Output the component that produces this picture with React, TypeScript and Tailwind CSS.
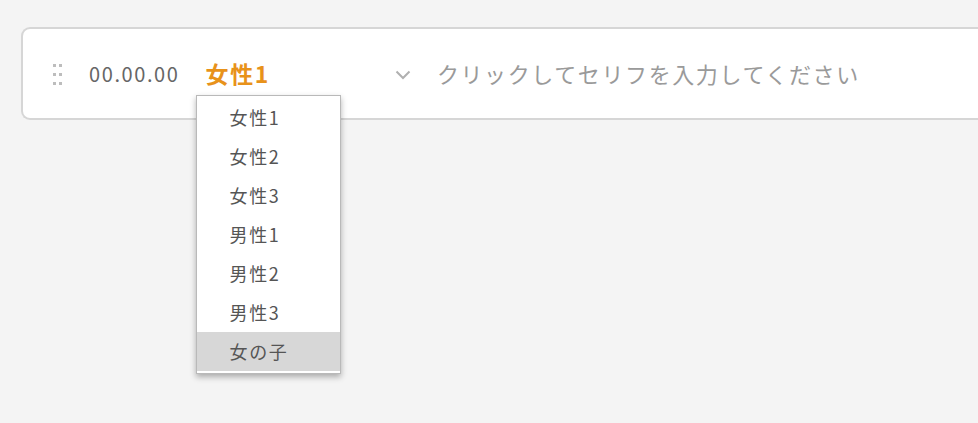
import React from 'react';

const speakers = ['女性1', '女性2', '女性3', '男性1', '男性2', '男性3', '女の子'];

const DragHandle = () => (
  <div className="grid grid-cols-2 gap-x-[3px] gap-y-[6px]">
    {Array.from({ length: 6 }).map((_, i) => (
      <span key={i} className="block w-[3px] h-[3px] bg-[#bdbdbd]" />
    ))}
  </div>
);

export default function App() {
  const selected = 6;
  return (
    <div
      className="min-h-[423px] w-full overflow-hidden bg-[#f4f4f4] pt-[27px] pl-[21px]"
      style={{ fontFamily: '"Noto Sans CJK JP", "Noto Sans", sans-serif' }}
    >
      <div className="relative flex items-center h-[93px] w-[1000px] bg-white border-2 border-r-0 border-[#d6d6d6] rounded-l-[9px] tracking-[0.1em]">
        <div className="ml-[30px] mt-[1px]">
          <DragHandle />
        </div>
        <span className="ml-[27px] text-[20px] text-[#666666]">00.00.00</span>
        <div className="relative ml-[26px]">
          <span className="text-[23px] font-bold text-[#e8921a]">女性1</span>
          {/* open speaker list */}
          <div className="absolute left-[-10px] top-[39px] w-[145px] bg-white border border-[#b9b9b9] shadow-[0_3px_6px_rgba(0,0,0,0.3)] pt-[2px] pb-[2px] z-10">
            {speakers.map((s, i) => (
              <div
                key={s}
                className={`h-[39px] flex items-center pl-[33px] text-[18px] text-[#555555] ${i === selected ? 'bg-[#d7d7d7]' : ''}`}
              >
                {s}
              </div>
            ))}
          </div>
        </div>
        <svg className="ml-[125px] mt-[2px]" width="16" height="10" viewBox="0 0 16 10" fill="none">
          <path d="M1.5 1.5 L8 8 L14.5 1.5" stroke="#b0b0b0" strokeWidth="2" />
        </svg>
        <span className="ml-[26px] text-[22px] text-[#9a9a9a]">クリックしてセリフを入力してください</span>
      </div>
    </div>
  );
}
